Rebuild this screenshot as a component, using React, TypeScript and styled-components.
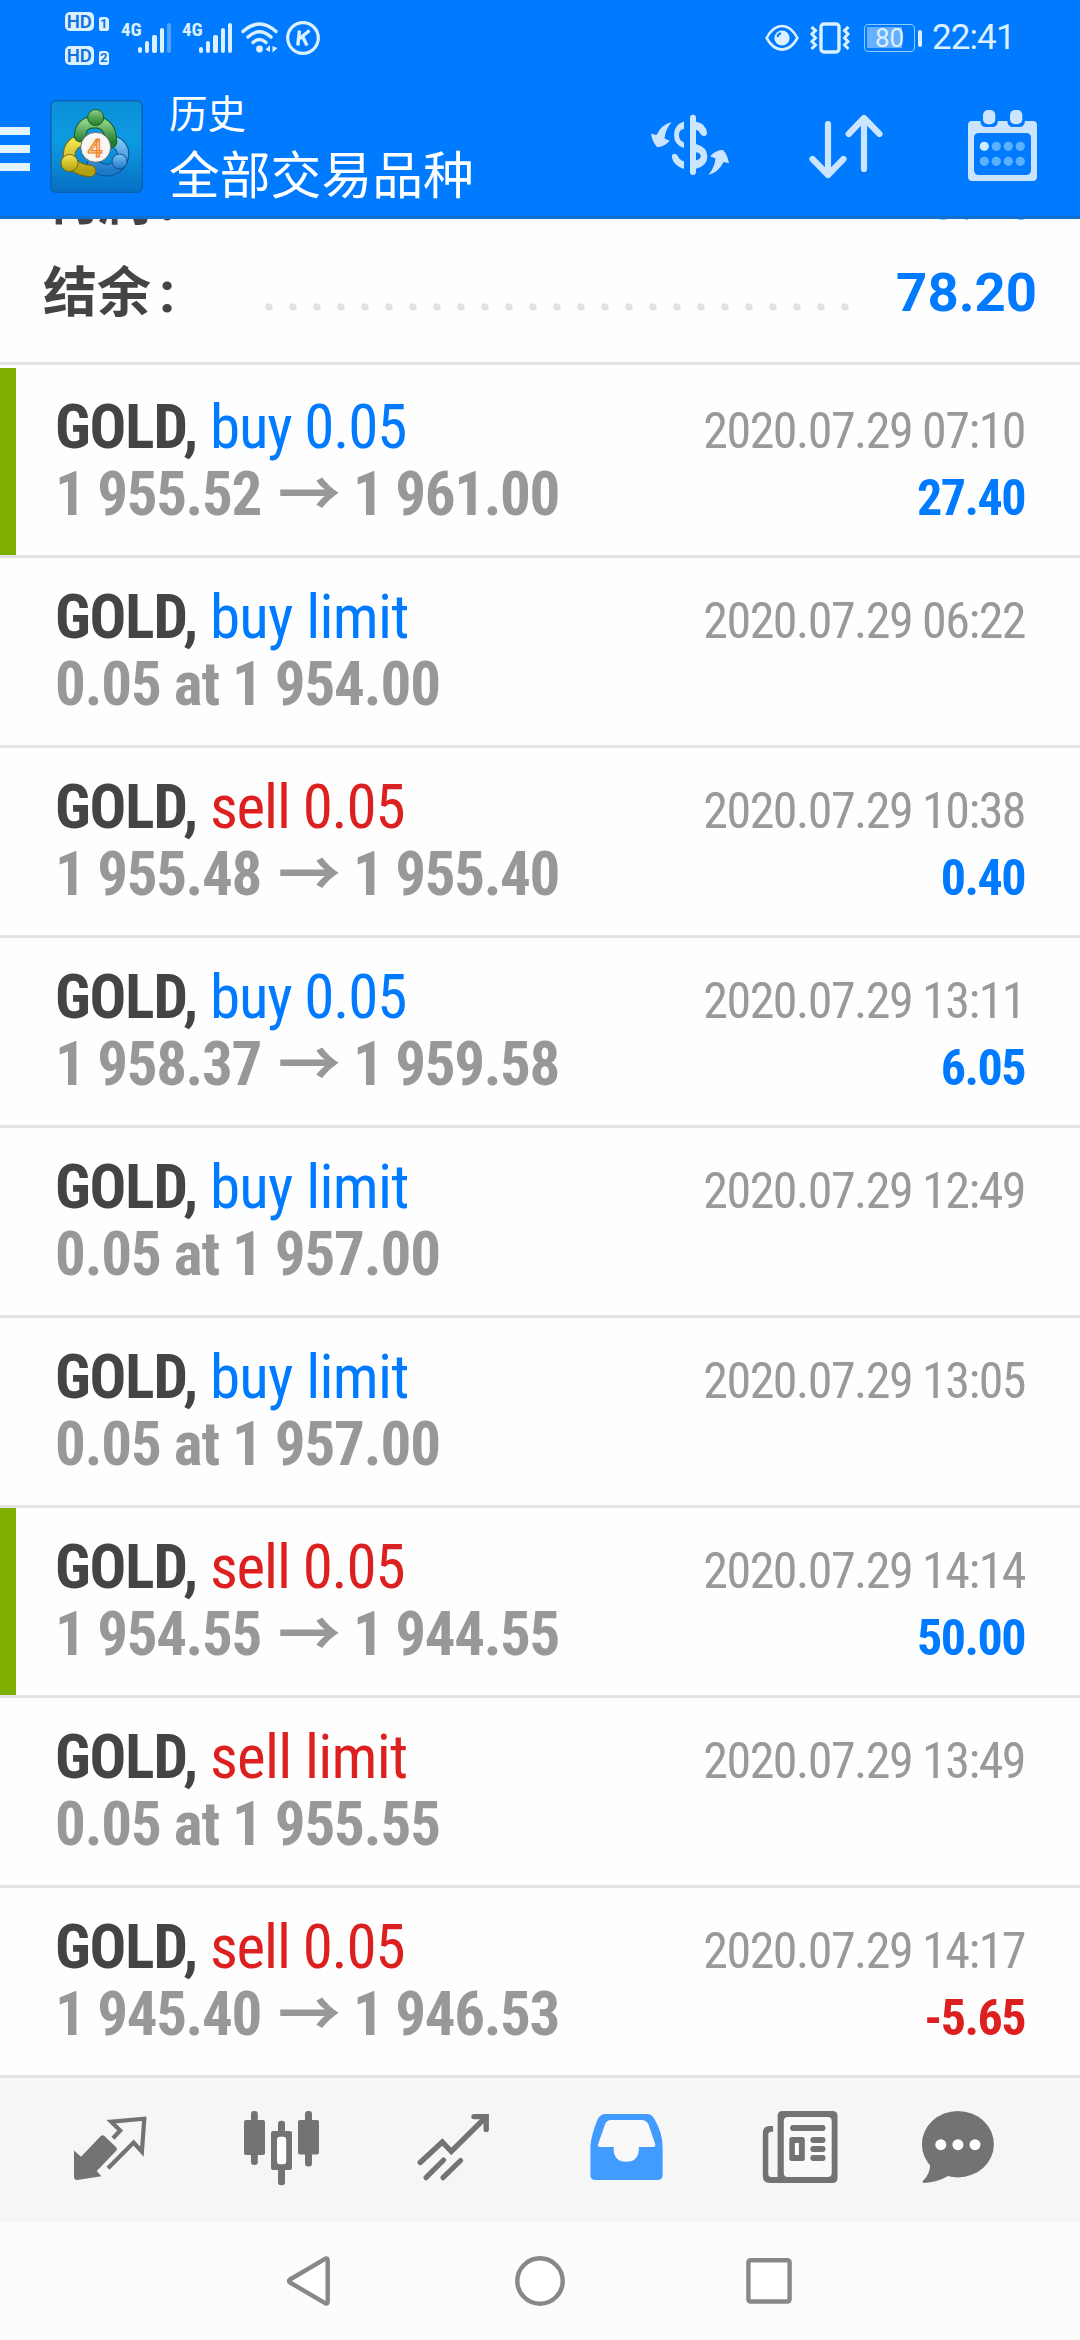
import React from "react";
import styled, { createGlobalStyle } from "styled-components";

const BLUE = "#007aff";
const RED = "#dc1f1f";
const ICON = "#737373";
const PALE = "#cce5ff";
const STATUS = "#dcf1ff";

const GlobalStyle = createGlobalStyle`
  * { box-sizing: border-box; }
  body { margin: 0; background: #fff; }
`;

const Screen = styled.div`
  width: 1080px;
  height: 2340px;
  display: flex;
  flex-direction: column;
  overflow: hidden;
  background: #fefefe;
  font-family: Roboto, "Noto Sans CJK SC", sans-serif;
`;

/* ---------- header ---------- */

const Header = styled.header`
  height: 219px;
  flex: none;
  background: ${BLUE};
  border-bottom: 3px solid #106fcf;
  display: flex;
  flex-direction: column;
`;

const StatusBar = styled.div`
  height: 76px;
  flex: none;
  display: flex;
  justify-content: space-between;
  padding: 0 69px 0 65px;
  color: ${STATUS};
`;

const StatusGroup = styled.div`
  display: flex;
  align-items: center;
  height: 76px;
`;

const HdStack = styled.div`
  display: flex;
  flex-direction: column;
  gap: 14px;
  width: 44px;
  margin-right: 12px;
`;

const HdLine = styled.div`
  display: flex;
  align-items: flex-end;
  gap: 5px;
  height: 20px;
`;

const HdBadge = styled.span<{ $small?: boolean }>`
  display: block;
  width: ${(p) => (p.$small ? 10.5 : 29)}px;
  height: ${(p) => (p.$small ? 14 : 19)}px;
  line-height: ${(p) => (p.$small ? 14 : 20)}px;
  border-radius: ${(p) => (p.$small ? "2px 4px 2px 2px" : "5px")};
  background: ${STATUS};
  color: #1273de;
  font-size: ${(p) => (p.$small ? 13 : 18.5)}px;
  font-weight: ${(p) => (p.$small ? 700 : 600)};
  text-align: center;
`;

const Network = styled.div<{ $gap: number }>`
  display: flex;
  align-items: flex-start;
  height: 32px;
  margin-right: ${(p) => p.$gap}px;
`;

const NetworkLabel = styled.span`
  width: 17px;
  font: 700 19px/15px "Roboto Condensed", Roboto, sans-serif;
`;

const Bars = styled.div`
  display: flex;
  align-items: flex-end;
  gap: 3px;
  height: 31px;
`;

const Bar = styled.i<{ $h: number; $dim?: boolean }>`
  width: 4.2px;
  height: ${(p) => p.$h}px;
  border-radius: 2px;
  background: ${STATUS};
  opacity: ${(p) => (p.$dim ? 0.35 : 1)};
`;

const Battery = styled.div`
  width: 51px;
  height: 28px;
  border: 1.5px solid #8fcaff;
  border-radius: 4px;
  padding: 2px;
  background: linear-gradient(#66b0ff, #66b0ff) 2px 2px / 35px 21px no-repeat;
  font-size: 26px;
  line-height: 22px;
  text-align: center;
`;

const BatteryTip = styled.i`
  width: 4px;
  height: 17px;
  border-radius: 2px;
  margin: 0 10px 0 3px;
  background: ${STATUS};
`;

const Clock = styled.span`
  font-size: 35px;
  line-height: 40px;
  width: 79px;
  white-space: nowrap;
  letter-spacing: -0.9px;
`;

const Toolbar = styled.div`
  flex: 1;
  display: flex;
  align-items: flex-start;
`;

const MenuButton = styled.div`
  width: 30px;
  margin: 51px 20px 0 0;
  display: flex;
  flex-direction: column;
  gap: 10px;
`;

const MenuLine = styled.i`
  height: 8px;
  background: #e3f4ff;
`;

const LogoBox = styled.div`
  width: 93px;
  height: 93px;
  margin-top: 24px;
`;

const Titles = styled.div`
  margin: 9px auto 0 26px;
  color: #fff;
  font-family: "Noto Sans CJK SC", sans-serif;
`;

const Title = styled.div`
  font-size: 38.5px;
  line-height: 52px;
`;

const Subtitle = styled.div`
  font-size: 50.8px;
  line-height: 70px;
`;

const Actions = styled.div`
  display: flex;
  padding: 29px 30px 0 0;
`;

const ActionIcon = styled.svg<{ $gap?: number }>`
  width: 90px;
  height: 80px;
  margin-right: ${(p) => p.$gap ?? 0}px;
`;

/* ---------- summary ---------- */

const Summary = styled.section`
  height: 146px;
  flex: none;
  overflow: hidden;
  display: flex;
  flex-direction: column;
  justify-content: flex-end;
  padding: 0 43px 24px 43px;
  border-bottom: 3px solid #e3e3e3;
`;

const SummaryRow = styled.div`
  height: 92px;
  flex: none;
  display: flex;
  align-items: center;
`;

const SummaryLabel = styled.div`
  width: 214px;
  padding-top: 2px;
  color: #444;
  font: 700 54px/92px Roboto, "Noto Sans CJK SC", sans-serif;
`;

const Colon = styled.span`
  font-size: 58px;
  margin-left: 8px;
`;

const Dots = styled.div`
  width: 600px;
  height: 8px;
  margin-top: 30px;
  background: radial-gradient(circle at 12px 4px, #e2e2e2 3.4px, transparent 4px) 0 0 / 24px 8px repeat-x;
`;

const SummaryValue = styled.div`
  margin-left: auto;
  color: ${BLUE};
  font-size: 54.5px;
  font-weight: 700;
  line-height: 92px;
`;

/* ---------- deals ---------- */

const List = styled.section`
  flex: none;
  padding-top: 3px;
`;

const Deal = styled.article<{ $mark?: boolean }>`
  height: 190px;
  padding: 26px 55px 0 55px;
  border-bottom: 3px solid #e3e3e3;
  display: flex;
  flex-direction: column;
  font-family: "Roboto Condensed", Roboto, sans-serif;
  background: linear-gradient(#7eaf00, #7eaf00) 0 0 / ${(p) => (p.$mark ? 16 : 0)}px 187px no-repeat;
`;

const Line = styled.div`
  height: 67px;
  display: flex;
  justify-content: space-between;
  align-items: baseline;
  font-size: 61px;
  line-height: 67px;
  white-space: pre;
`;

const Symbol = styled.b`
  color: #444;
  letter-spacing: -1.1px;
`;

const Side = styled.span<{ $side: "buy" | "sell"; $limit: boolean }>`
  color: ${(p) => (p.$side === "buy" ? BLUE : RED)};
  letter-spacing: ${(p) => (p.$limit ? -0.7 : -1.15)}px;
`;

const Price = styled.span<{ $order: boolean }>`
  color: #98989b;
  font-weight: 700;
  letter-spacing: ${(p) => (p.$order ? -1.1 : -1.35)}px;
`;

const Arrow = styled.span`
  font-family: "Noto Sans CJK SC", sans-serif;
  font-size: 63px;
  font-weight: 700;
  line-height: 0;
  vertical-align: -1px;
  margin: 0 1px 0 4px;
`;

const Time = styled.span`
  color: #999;
  font-size: 50px;
  letter-spacing: -1.5px;
`;

const Profit = styled.b<{ $loss: boolean }>`
  color: ${(p) => (p.$loss ? RED : BLUE)};
  font-size: 50px;
  letter-spacing: -1.5px;
`;

/* ---------- bottom bars ---------- */

const Tabs = styled.nav`
  height: 144px;
  flex: none;
  background: #f6f6f6;
  display: grid;
  grid-template-columns: 172px 170px 176px 168px 180px 136px;
  padding-left: 24px;
  justify-items: center;
  align-items: center;
`;

const TabIcon = styled.svg`
  width: 80px;
  height: 96px;
  fill: ${ICON};
`;

const NavBar = styled.nav`
  flex: 1;
  background: #fcfcfc;
  display: flex;
  align-items: center;
  justify-content: center;
  gap: 170px;
`;

const NavIcon = styled.svg`
  width: 60px;
  height: 60px;
  fill: #fff;
  stroke: #888;
  stroke-width: 4.4;
  stroke-linejoin: round;
`;

type DealData = {
  side: "buy" | "sell";
  kind: string;
  time: string;
  from?: string;
  to?: string;
  order?: string;
  profit?: string;
  mark?: boolean;
};

const deals: DealData[] = [
  { side: "buy", kind: "0.05", from: "1 955.52", to: "1 961.00", time: "2020.07.29 07:10", profit: "27.40", mark: true },
  { side: "buy", kind: "limit", order: "0.05 at 1 954.00", time: "2020.07.29 06:22" },
  { side: "sell", kind: "0.05", from: "1 955.48", to: "1 955.40", time: "2020.07.29 10:38", profit: "0.40" },
  { side: "buy", kind: "0.05", from: "1 958.37", to: "1 959.58", time: "2020.07.29 13:11", profit: "6.05" },
  { side: "buy", kind: "limit", order: "0.05 at 1 957.00", time: "2020.07.29 12:49" },
  { side: "buy", kind: "limit", order: "0.05 at 1 957.00", time: "2020.07.29 13:05" },
  { side: "sell", kind: "0.05", from: "1 954.55", to: "1 944.55", time: "2020.07.29 14:14", profit: "50.00", mark: true },
  { side: "sell", kind: "limit", order: "0.05 at 1 955.55", time: "2020.07.29 13:49" },
  { side: "sell", kind: "0.05", from: "1 945.40", to: "1 946.53", time: "2020.07.29 14:17", profit: "-5.65" },
];

const Logo = () => (
  <svg width="93" height="93" viewBox="0 0 93 93">
    <defs>
      <linearGradient id="bg" x1="0" y1="0" x2="0" y2="1">
        <stop offset="0" stopColor="#0b90da" />
        <stop offset="0.45" stopColor="#0d9be0" />
        <stop offset="1" stopColor="#066fc4" />
      </linearGradient>
      <linearGradient id="gr" x1="0" y1="0" x2="0" y2="1">
        <stop offset="0" stopColor="#8fcf86" />
        <stop offset="1" stopColor="#1f7d2e" />
      </linearGradient>
      <linearGradient id="ye" x1="0" y1="0" x2="0" y2="1">
        <stop offset="0" stopColor="#f6e552" />
        <stop offset="1" stopColor="#b3a012" />
      </linearGradient>
      <linearGradient id="bl" x1="0" y1="0" x2="0" y2="1">
        <stop offset="0" stopColor="#7cc4f2" />
        <stop offset="1" stopColor="#1d78c8" />
      </linearGradient>
    </defs>
    <rect x="0.8" y="0.8" width="91.4" height="91.4" rx="5" fill="url(#bg)" stroke="#0b62b4" strokeWidth="1.6" />
    <g strokeLinecap="round" fill="none">
      <path d="M65 42 Q73 46 73 54 Q72 67 60 70 Q50 71 43 64" stroke="#0d4f8e" strokeWidth="12.5" />
      <path d="M65 42 Q73 46 73 54 Q72 67 60 70 Q50 71 43 64" stroke="url(#bl)" strokeWidth="10.5" />
      <path d="M31 40 Q19 44 19 56 Q21 69 40 71" stroke="#736a10" strokeWidth="12.5" />
      <path d="M31 40 Q19 44 19 56 Q21 69 40 71" stroke="url(#ye)" strokeWidth="10.5" />
      <path d="M30 36 Q31 22 45 22 Q61 23 61 42" stroke="#155c22" strokeWidth="12.5" />
      <path d="M30 36 Q31 22 45 22 Q61 23 61 42" stroke="url(#gr)" strokeWidth="10.5" />
    </g>
    <circle cx="45.7" cy="17.5" r="8" fill="url(#gr)" stroke="#155c22" />
    <circle cx="19.5" cy="63" r="8.5" fill="url(#ye)" stroke="#736a10" />
    <circle cx="69.5" cy="61.5" r="7.5" fill="url(#bl)" stroke="#0d4f8e" />
    <circle cx="45.7" cy="47.3" r="15" fill="#f8f5f5" stroke="#555" strokeWidth="0.8" />
    <text x="45" y="56.7" textAnchor="middle" fontFamily="Roboto" fontSize="26.5" fontWeight="500" fill="#f9c08a" stroke="#ef7f1f" strokeWidth="1">
      4
    </text>
  </svg>
);

const Signal = ({ weak, gap }: { weak?: boolean; gap: number }) => (
  <Network $gap={gap}>
    <NetworkLabel>4G</NetworkLabel>
    <Bars>
      <Bar $h={6} />
      <Bar $h={12.5} />
      <Bar $h={18.5} />
      <Bar $h={25.5} />
      <Bar $h={30.5} $dim={weak} />
    </Bars>
  </Network>
);

const ExchangeArrow = "M26.7 12 Q16.5 14.5 11.5 25 L6 23.7 Q7.5 32 11.5 36.4 Q12.5 37.4 14 37 Q20 36 24.8 30.8 L19.5 28.5 Q20.5 19 26.7 12Z";

const KIcon = styled.svg`
  width: 36px;
  height: 36px;
  margin-left: 6px;
`;

const VibrateIcon = styled.svg`
  width: 42px;
  height: 34px;
  margin: 0 13px 0 10px;
`;

export default function App() {
  return (
    <Screen>
      <GlobalStyle />
      <Header>
        <StatusBar>
          <StatusGroup>
            <HdStack>
              <HdLine>
                <HdBadge>HD</HdBadge>
                <HdBadge $small>1</HdBadge>
              </HdLine>
              <HdLine>
                <HdBadge>HD</HdBadge>
                <HdBadge $small>2</HdBadge>
              </HdLine>
            </HdStack>
            <Signal weak gap={11} />
            <Signal gap={9} />
            <svg width="38" height="34" viewBox="0 0 38 34" fill="none" stroke={STATUS} strokeWidth="3.4" strokeLinecap="round">
              <path d="M2 10.5 Q18.5 -4.5 35 10.5 M7 16 Q18.5 5.5 30 16 M12 21.5 Q18.5 15.5 25 21.5" />
              <circle cx="18.5" cy="28" r="3.4" fill={STATUS} stroke="none" />
              <path d="M24.5 28.5 L29 24 V31 Z M31.5 25 V31.5 L36.5 27 Z" fill={STATUS} stroke="none" />
            </svg>
            <KIcon viewBox="0 0 36 36" fill="none" stroke={STATUS}>
              <circle cx="18" cy="18" r="15.3" strokeWidth="3.2" />
              <path d="M14.5 10.5 L12.8 25.5 M24.5 10.5 L14 19 M17.5 16.5 L22 25.5" strokeWidth="3.4" />
            </KIcon>
          </StatusGroup>
          <StatusGroup>
            <svg width="34" height="28" viewBox="0 0 34 28" fill="none" stroke={STATUS} strokeWidth="2.6">
              <path d="M1.6 14 Q8 2 17 2 Q26 2 32.4 14 Q26 25.6 17 25.6 Q8 25.6 1.6 14Z" />
              <circle cx="17" cy="14" r="7.6" fill={STATUS} stroke="none" />
              <path d="M12.5 13 Q13 9.8 16 9.3" stroke={BLUE} strokeWidth="2" />
            </svg>
            <VibrateIcon viewBox="0 0 42 34" fill="none" stroke={STATUS} strokeWidth="3.4">
              <rect x="12" y="3" width="18" height="28" rx="3" />
              <path
                d="M2.5 6 L6.5 9.5 L3 13 L6.5 17 L3 20.5 L6.5 24 L2.5 28 M39.5 6 L35.5 9.5 L39 13 L35.5 17 L39 20.5 L35.5 24 L39.5 28"
                strokeWidth="3"
              />
            </VibrateIcon>
            <Battery>80</Battery>
            <BatteryTip />
            <Clock>22:41</Clock>
          </StatusGroup>
        </StatusBar>
        <Toolbar>
          <MenuButton>
            <MenuLine />
            <MenuLine />
            <MenuLine />
          </MenuButton>
          <LogoBox>
            <Logo />
          </LogoBox>
          <Titles>
            <Title>历史</Title>
            <Subtitle>全部交易品种</Subtitle>
          </Titles>
          <Actions>
            <ActionIcon $gap={65} viewBox="0 -5 90 80" fill={PALE}>
              <rect x="45" y="4.7" width="6" height="60.3" rx="3" />
              <path d="M39 11.5 Q29 14.5 29 25 Q29 35 39 38 V32.5 Q34 30.5 34 25 Q34 19.5 39 19Z" />
              <path d="M51 11.8 Q61 13.5 62 23 Q61.8 26 59 26 Q56.6 26 55.3 23.5 Q54 20.5 51 19.8Z" />
              <path d="M51 34 Q62.3 37 62.3 46.5 Q62.3 56 51 58.7 V50.2 Q55.7 49.5 55.7 46 Q55.7 43 51 42.3Z" />
              <path d="M39 58.9 Q28 55.5 26.8 46.5 Q27 43.8 29.8 43.8 Q31.8 43.8 33 46.3 Q34.8 50.5 39 51.3Z" />
              <path d={ExchangeArrow} />
              <path d={ExchangeArrow} transform="rotate(180 45 38.5)" />
            </ActionIcon>
            <ActionIcon $gap={70} viewBox="0 0 90 80" fill="none" stroke={PALE} strokeWidth="6.2" strokeLinecap="round" strokeLinejoin="round">
              <path d="M28 19 V70 M12.5 54 L28 70 L43.5 54" />
              <path d="M64 64 V13 M48.7 29 L64 13 L79.5 29" />
            </ActionIcon>
            <ActionIcon viewBox="0 0 90 80" fill={PALE}>
              <path
                fillRule="evenodd"
                d="M12 16 H20.3 Q20.8 22 26 22 H32 Q37.5 22 38 16 H47.3 Q47.8 22 53 22 H59 Q64.5 22 65 16 H73 Q77 16 77 20 V71.5 Q77 76 72.5 76 H12.5 Q8 76 8 71.5 V20 Q8 16 12 16Z M19 28 Q14 28 14 33 V65 Q14 70 19 70 H66 Q71 70 71 65 V33 Q71 28 66 28Z"
              />
              <rect x="23" y="5" width="12.3" height="14.3" rx="5" />
              <rect x="50" y="5" width="12.3" height="14.3" rx="5" />
              {[41.3, 56.3].map((y) =>
                [24.3, 36.3, 48.3, 60.3].map((x) => (
                  <circle key={`${x}-${y}`} cx={x} cy={y} r="4.6" fill={x < 30 && y < 50 ? "#cdeeff" : "#5cb2ff"} />
                ))
              )}
            </ActionIcon>
          </Actions>
        </Toolbar>
      </Header>

      <Summary>
        <SummaryRow>
          <SummaryLabel>
            利润<Colon>:</Colon>
          </SummaryLabel>
          <Dots />
          <SummaryValue>78.20</SummaryValue>
        </SummaryRow>
        <SummaryRow>
          <SummaryLabel>
            结余<Colon>:</Colon>
          </SummaryLabel>
          <Dots />
          <SummaryValue>78.20</SummaryValue>
        </SummaryRow>
      </Summary>

      <List>
        {deals.map((d) => (
          <Deal key={d.time} $mark={d.mark}>
            <Line>
              <span>
                <Symbol>GOLD, </Symbol>
                <Side $side={d.side} $limit={d.kind === "limit"}>
                  {d.side} {d.kind}
                </Side>
              </span>
              <Time>{d.time}</Time>
            </Line>
            <Line>
              <Price $order={!!d.order}>
                {d.order ?? (
                  <>
                    {d.from} <Arrow>→</Arrow> {d.to}
                  </>
                )}
              </Price>
              {d.profit && <Profit $loss={d.profit.startsWith("-")}>{d.profit}</Profit>}
            </Line>
          </Deal>
        ))}
      </List>

      <Tabs>
        <TabIcon viewBox="0 0 80 96">
          <path d="M4 48.5 L11 54.7 L30.8 34 Q32.6 32.4 34.4 34 L46.4 45.6 Q47.6 47 46.4 48.4 L26.8 69 L31.3 74.2 L7 78 Q4 78 4 75Z" />
          <path d="M43 36.2 L50.2 28.5 L41.2 19.7 L74.3 16.7 L71.9 49.7 L63.6 40.5 L38 66.3" fill="none" stroke={ICON} strokeWidth="4.2" />
        </TabIcon>
        <TabIcon viewBox="0 0 80 96">
          <rect x="3" y="18" width="21" height="35" rx="2" />
          <rect x="10" y="9" width="6.8" height="54" rx="3" />
          <rect x="37" y="18.7" width="7" height="64.5" rx="3" />
          <rect x="30" y="29" width="21" height="39" rx="2" />
          <rect x="36" y="34.7" width="9.2" height="27.5" rx="3" fill="#fff" />
          <rect x="57" y="18" width="21" height="34.5" rx="2" />
          <rect x="64" y="9" width="7" height="55.5" rx="3" />
        </TabIcon>
        <TabIcon viewBox="0 0 80 96">
          <g fill="none" stroke={ICON} strokeWidth="5.2" strokeLinecap="round">
            <path d="M6.2 60.5 L28.3 40 L37.3 49.5 L72 15" strokeWidth="5.4" />
            <path d="M60 14.6 H72.2 V27.4" strokeWidth="5.4" />
            <path d="M12 75.7 L29.6 58 M29 75.7 L46.6 58.5" />
          </g>
        </TabIcon>
        <TabIcon viewBox="0 0 80 96">
          <path d="M4.4 44 Q5.5 32 11.5 17.5 Q14.5 12 19 12 H61 Q65.5 12 68.5 17 Q76.6 31 76.6 45 V73 Q76.6 78 71.6 78 H9.4 Q4.4 78 4.4 73Z" fill="#429cff" />
          <path d="M25 18 H55.5 Q60.5 18 62.5 22.5 L69.2 42 Q70 45 67 45 H52.8 V48 Q52 59.8 40.3 59.8 Q28.5 59.8 27.7 48 V45 H14 Q11.2 45 12.2 42 L19 22.5 Q20.5 18 25 18Z" fill="#f9f9f9" />
        </TabIcon>
        <TabIcon viewBox="0 0 80 96">
          <path d="M17.6 75 V14 Q17.6 9 22.6 9 H72.5 Q77.5 9 77.5 14 V76 Q77.5 81 72.5 81 H9.8 Q2.8 81 2.8 74 V31 Q2.8 24 9.8 24 H13.1 V29.7 H11.3 Q8.3 29.7 8.3 32.7 V72 Q8.3 75 11.3 75Z" />
          <rect x="23.8" y="15" width="47.9" height="60" rx="4" fill="#f9f9f9" />
          <rect x="30" y="23" width="35.5" height="6" rx="3" />
          <rect x="29.3" y="35" width="15.5" height="24" rx="2.5" />
          <rect x="34.9" y="41" width="4" height="12" fill="#fff" />
          <rect x="50.3" y="35" width="15.2" height="6" rx="3" />
          <rect x="50.3" y="44" width="15.2" height="6" rx="3" />
          <rect x="50.3" y="53" width="15.2" height="6" rx="3" />
        </TabIcon>
        <TabIcon viewBox="0 0 80 96">
          <ellipse cx="39.9" cy="42.2" rx="36" ry="33.2" />
          <path d="M12.2 61 Q12.5 72 4.6 79.2 Q4 81 6 81 Q19 80.5 31 73.5Z" />
          <circle cx="22.8" cy="42.7" r="5.5" fill="#fff" />
          <circle cx="39.9" cy="42.7" r="5.5" fill="#fff" />
          <circle cx="57" cy="42.7" r="5.5" fill="#fff" />
        </TabIcon>
      </Tabs>
      <NavBar>
        <NavIcon viewBox="0 0 60 60">
          <path d="M10 28.5 L45.5 7.6 Q47.7 7 47.7 9.5 V50.5 Q47.7 53 45.5 52.4 L10 31.5 Q8 30 10 28.5Z" />
        </NavIcon>
        <NavIcon viewBox="0 0 60 60">
          <circle cx="30" cy="30" r="22.7" />
        </NavIcon>
        <NavIcon viewBox="0 0 60 60">
          <rect x="8.4" y="9.3" width="41.2" height="41.2" rx="2" />
        </NavIcon>
      </NavBar>
    </Screen>
  );
}
